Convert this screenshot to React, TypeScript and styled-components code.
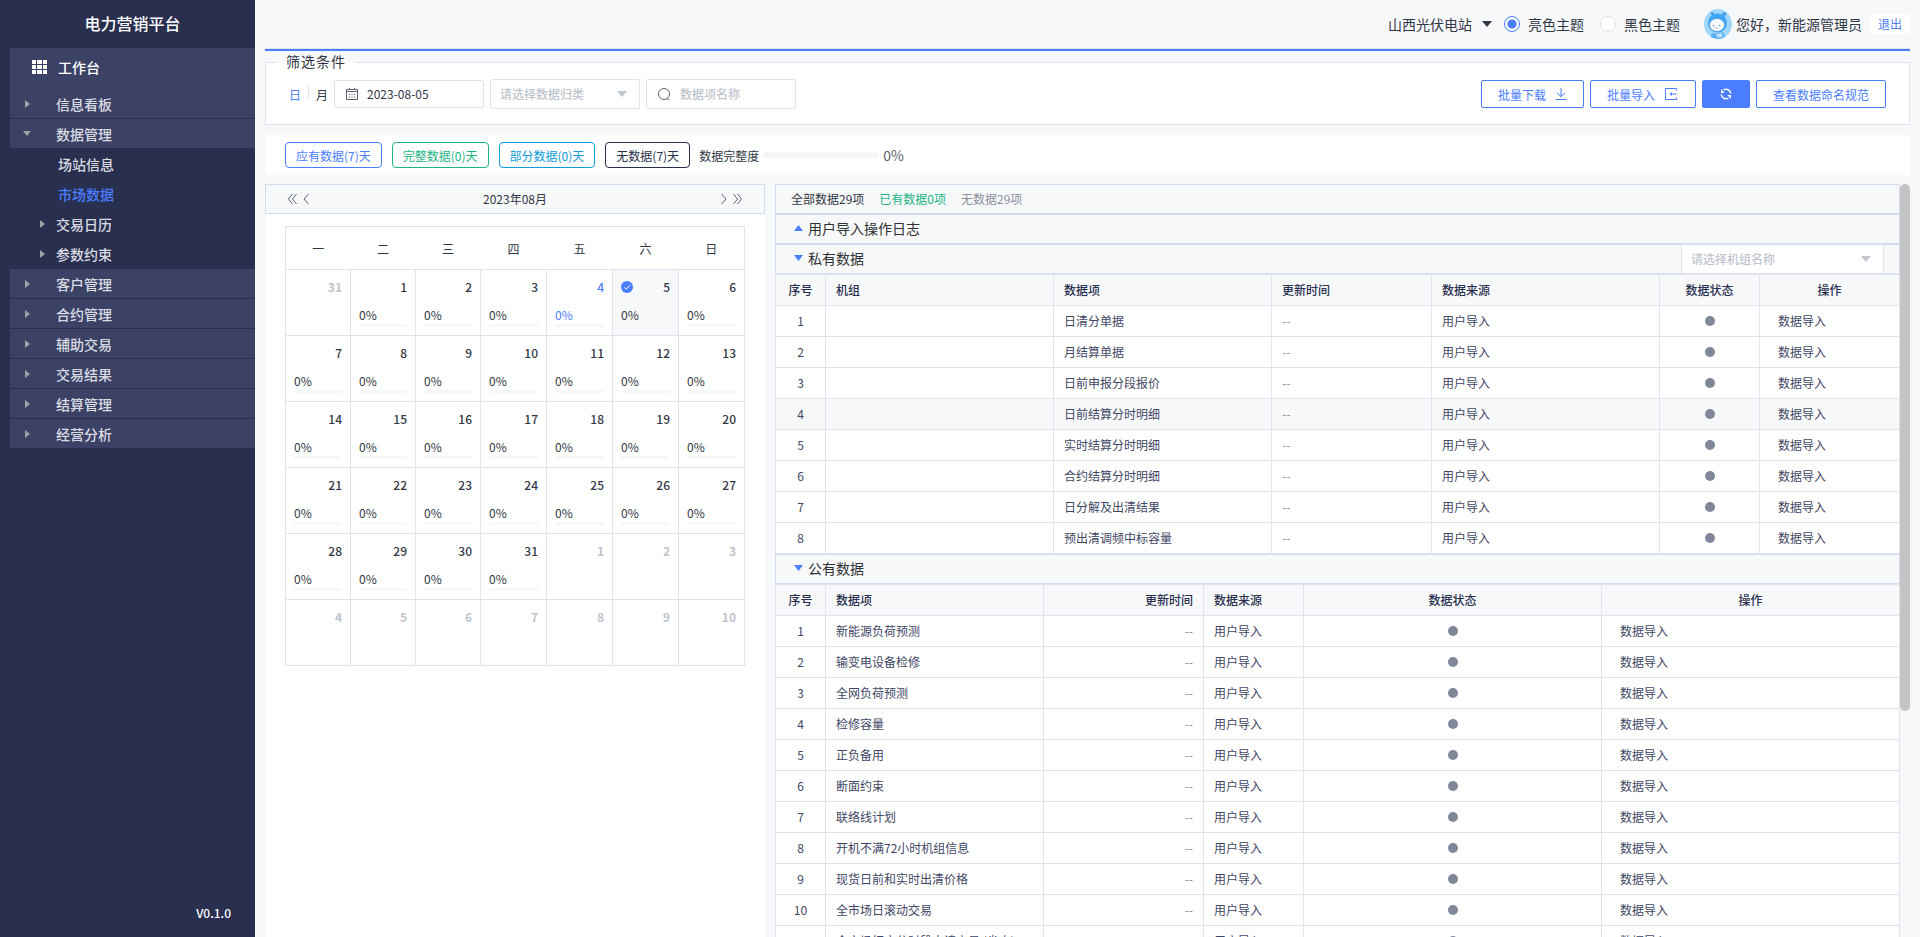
import React from "react";
import styled, { createGlobalStyle } from "styled-components";

const c = {
  primary: "#4a7dff",
  green: "#1bb584",
  sky: "#109bdc",
  navy: "#292f4e",
  menu: "#3b4265",
  page: "#f7f8fa",
  line: "#dfe3f0",
  panelLine: "#d3dcef",
  text: "#303744",
  cell: "#3f4764",
  muted: "#8b909b",
  placeholder: "#c0c4cc",
  dot: "#7f8799",
};

const GlobalStyle = createGlobalStyle`
  *, *::before, *::after { box-sizing: border-box; }
  body { margin: 0; }
  body, button, input, select {
    font-family: "Noto Sans CJK SC", "Noto Sans", sans-serif;
    font-size: 12px;
    color: ${c.text};
  }
  button { cursor: pointer; }
  svg { display: block; flex: none; }
`;

const Shell = styled.div`
  display: grid;
  grid-template-columns: 255px minmax(0, 1fr);
  height: 100vh;
  overflow: hidden;
  background: ${c.page};
`;

/* Sidebar */
const Sidebar = styled.aside`
  display: flex;
  flex-direction: column;
  padding-left: 10px;
  background: ${c.navy};
  color: #fff;
`;
const Brand = styled.h1`
  margin: 0;
  padding-bottom: 2px;
  font-size: 16px;
  font-weight: 500;
  line-height: 46px;
  text-align: center;
`;
const Nav = styled.nav`
  display: flex;
  flex-direction: column;
  flex: 1;
`;
const Workbench = styled.a`
  display: flex;
  align-items: center;
  gap: 11px;
  height: 41px;
  padding: 0 0 4px 22px;
  background: ${c.menu};
  color: #fff;
  font-size: 14px;
  font-weight: 500;
  text-decoration: none;
`;
const MenuItem = styled.a<{ $level: "top" | "sub"; $active?: boolean }>`
  display: flex;
  align-items: center;
  height: 30px;
  padding-left: ${(p) => (p.$level === "top" ? 13 : 28)}px;
  border-bottom: 1px solid ${c.navy};
  background: ${(p) => (p.$level === "top" ? c.menu : "transparent")};
  color: ${(p) => (p.$active ? c.primary : "#d9dbe3")};
  font-size: 14px;
  font-weight: 500;
  text-decoration: none;
`;
const MenuArrow = styled.span<{ $level: "top" | "sub"; $leaf: boolean; $open: boolean }>`
  width: ${(p) => (p.$level === "top" ? 33 : p.$leaf ? 20 : 18)}px;
  padding-left: ${(p) => (p.$open ? 0 : 2)}px;
  color: #a0a1a6;
`;
const Version = styled.footer`
  padding: 0 24px 15px;
  font-weight: 500;
  line-height: 18px;
  text-align: right;
`;

/* Main column */
const Main = styled.main`
  display: flex;
  flex-direction: column;
  min-width: 0;
  min-height: 0;
  padding: 0 10px;
`;
const Header = styled.header`
  display: flex;
  align-items: center;
  justify-content: flex-end;
  height: 51px;
  padding-bottom: 2px;
  border-bottom: 2px solid ${c.primary};
  box-shadow: inset 0 -1px 0 ${c.line};
  font-size: 14px;
`;
const Station = styled.button`
  display: flex;
  align-items: center;
  gap: 10px;
  margin-right: 12px;
  padding: 0;
  border: 0;
  background: none;
  font-size: 14px;
`;
const RadioLabel = styled.label`
  display: flex;
  align-items: center;
  gap: 8px;
  margin-right: 16px;
`;
const Radio = styled.input`
  appearance: none;
  width: 16px;
  height: 16px;
  margin: 0;
  border: 1px solid #dcdfe6;
  border-radius: 50%;
  background: #fff;
  &:checked {
    border-color: ${c.primary};
    background: radial-gradient(circle, ${c.primary} 4px, #fff 5px);
  }
`;
const User = styled.div`
  display: flex;
  align-items: center;
  gap: 4px;
  margin: 0 8px;
`;
const Logout = styled.button`
  height: 20px;
  padding: 0 8px;
  border: 0;
  border-radius: 3px;
  background: #fff;
  color: ${c.primary};
  line-height: 20px;
`;

/* Filters */
const Filters = styled.fieldset`
  min-width: 0;
  margin: 0;
  padding: 0 23px 15px 11px;
  border: 1px solid ${c.line};
  background: #fff;
`;
const Legend = styled.legend`
  padding: 0 9px 2px;
  font-size: 14px;
  letter-spacing: 1px;
  line-height: 20px;
`;
const FilterRow = styled.div`
  display: flex;
  align-items: center;
  justify-content: space-between;
  padding: 6px 0 0 12px;
`;
const Group = styled.div`
  display: flex;
  align-items: center;
  gap: 6px;
`;
const Period = styled.div`
  display: flex;
  align-items: center;
  gap: 7px;
`;
const PeriodButton = styled.button<{ $on?: boolean }>`
  padding: 0;
  border: 0;
  background: none;
  color: ${(p) => (p.$on ? c.primary : c.text)};
`;
const Divider = styled.span`
  width: 1px;
  height: 14px;
  margin-bottom: 4px;
  background: ${c.line};
`;
const Field = styled.label<{ $short?: boolean }>`
  display: flex;
  align-items: center;
  gap: 9px;
  width: 150px;
  height: ${(p) => (p.$short ? 28 : 30)}px;
  padding: 0 11px;
  border: 1px solid ${c.line};
  border-radius: 2px;
  background: #fff;
  color: #5b6270;
`;
const TextInput = styled.input`
  flex: 1;
  min-width: 0;
  padding: 0 0 1px;
  border: 0;
  outline: 0;
  background: none;
  &::placeholder { color: ${c.placeholder}; font-weight: 500; }
`;
const SelectField = styled.label<{ $wide?: boolean }>`
  display: flex;
  align-items: center;
  width: ${(p) => (p.$wide ? 203 : 150)}px;
  height: 30px;
  padding: 0 12px 0 9px;
  border: 1px solid ${c.line};
  border-radius: ${(p) => (p.$wide ? 0 : 2)}px;
  background: #fff;
  color: ${c.placeholder};
`;
const Select = styled.select`
  flex: 1;
  min-width: 0;
  appearance: none;
  padding: 0 0 1px;
  border: 0;
  outline: 0;
  background: none;
  color: ${c.placeholder};
  font-weight: 500;
`;
const Button = styled.button<{ $solid?: boolean }>`
  display: flex;
  align-items: center;
  justify-content: center;
  gap: 9px;
  height: 28px;
  padding: 0 16px;
  border: 1px solid ${c.primary};
  border-radius: 2px;
  background: ${(p) => (p.$solid ? c.primary : "#fff")};
  color: ${(p) => (p.$solid ? "#fff" : c.primary)};
`;

/* Completeness strip */
const Strip = styled.section`
  display: flex;
  align-items: center;
  gap: 10px;
  height: 40px;
  margin-top: 10px;
  padding-left: 20px;
  background: #fff;
`;
const Tag = styled.button<{ $tone: string }>`
  height: 26px;
  padding: 0 10px;
  border: 1px solid ${(p) => p.$tone};
  border-radius: 4px;
  background: #fff;
  color: ${(p) => p.$tone};
`;
const Completeness = styled.div`
  display: flex;
  align-items: center;
  gap: 4px;
  margin-left: -1px;
`;
const Track = styled.span`
  width: 115px;
  height: 6px;
  border-radius: 3px;
  background: #f6f7f9;
`;
const Percent = styled.span`
  padding: 0 0 1px 1px;
  color: #606266;
  font-size: 14px;
`;

/* Panels */
const Panels = styled.div`
  display: grid;
  grid-template-columns: 500px minmax(0, 1fr);
  gap: 10px;
  flex: 1;
  min-height: 0;
  margin-top: 9px;
`;
const CalendarPanel = styled.section`
  background: #fff;
`;
const Bar = styled.div`
  display: flex;
  align-items: center;
  height: 30px;
  border: 1px solid ${c.panelLine};
  background: ${c.page};
`;
const CalendarBar = styled(Bar)`
  justify-content: space-between;
  padding: 0 21px 1px;
`;
const Arrows = styled.div`
  display: flex;
  gap: 6px;
`;
const ArrowButton = styled.button`
  padding: 0;
  border: 0;
  background: none;
  color: #5b6270;
`;
const CalendarTable = styled.table`
  width: calc(100% - 40px);
  margin: 12px 20px 0;
  border-collapse: collapse;
  table-layout: fixed;
`;
const WeekDay = styled.th`
  height: 43px;
  padding: 0;
  border: 1px solid ${c.line};
  border-width: 1px 0;
  font-weight: 400;
  &:first-child { border-left-width: 1px; }
  &:last-child { border-right-width: 1px; }
`;
const Day = styled.td<{ $selected?: boolean }>`
  height: 66px;
  padding: 8px 8px 0;
  border: 1px solid ${c.line};
  background: ${(p) => (p.$selected ? c.page : "#fff")};
  vertical-align: top;
`;
const DayHead = styled.div<{ $outside?: boolean; $today?: boolean }>`
  display: flex;
  align-items: center;
  justify-content: space-between;
  color: ${(p) => (p.$outside ? c.placeholder : p.$today ? c.primary : c.text)};
  font-weight: ${(p) => (p.$outside ? 700 : 500)};
  line-height: 18px;
`;
const DayRate = styled.div<{ $today?: boolean }>`
  padding-top: 10px;
  border-bottom: 3px solid #f6f7f9;
  color: ${(p) => (p.$today ? c.primary : c.text)};
  line-height: 18px;
`;

const DataPanel = styled.section`
  display: grid;
  grid-template-columns: minmax(0, 1fr) 10px;
  min-height: 0;
  overflow: hidden;
`;
const DataScroll = styled.div`
  min-height: 0;
  overflow: hidden;
`;
const ScrollThumb = styled.div`
  height: 70%;
  border-radius: 5px;
  background: #c4c4c4;
`;
const Summary = styled(Bar)`
  gap: 15px;
  padding: 0 0 1px 15px;
`;
const Count = styled.span<{ $tone: string }>`
  color: ${(p) => p.$tone};
`;
const SectionBar = styled(Bar)`
  justify-content: space-between;
  padding: 0 15px 0 18px;
`;
const Toggle = styled.button`
  display: flex;
  align-items: center;
  gap: 5px;
  padding: 0 0 2px;
  border: 0;
  background: none;
  color: #303133;
  font-size: 14px;
  svg { color: ${c.primary}; }
`;
const DataTable = styled.table`
  width: 100%;
  border-collapse: collapse;
  table-layout: fixed;
`;
const Th = styled.th<{ $align?: string }>`
  height: 31px;
  padding: 0 10px;
  border: 1px solid ${c.line};
  background: ${c.page};
  color: ${c.navy};
  font-weight: 500;
  line-height: 18px;
  text-align: ${(p) => p.$align || "left"};
`;
const Row = styled.tr<{ $hover?: boolean }>`
  background: ${(p) => (p.$hover ? c.page : "#fff")};
`;
const Td = styled.td<{ $align?: string; $muted?: boolean }>`
  height: 31px;
  padding: 0 10px;
  border: 1px solid ${c.line};
  color: ${(p) => (p.$muted ? c.muted : c.cell)};
  line-height: 18px;
  text-align: ${(p) => p.$align || "left"};
  white-space: nowrap;
`;
const Dot = styled.i`
  display: block;
  width: 10px;
  height: 10px;
  margin: 0 auto;
  border-radius: 50%;
  background: ${c.dot};
`;
const ImportLink = styled.a`
  padding-left: 8px;
  color: ${c.cell};
  text-decoration: none;
`;

/* Icons */
const Triangle = ({ dir, size = 10 }: { dir: "up" | "down" | "right"; size?: number }) => {
  const depth = Math.ceil(size * 0.6);
  if (dir === "right")
    return (
      <svg width="5" height={size} viewBox={`0 0 5 ${size}`}>
        <path d={`M0 0l5 ${size / 2}-5 ${size / 2}z`} fill="currentColor" />
      </svg>
    );
  return (
    <svg width={size} height={depth} viewBox={`0 0 ${size} ${depth}`}>
      <path
        d={dir === "up" ? `M0 ${depth}L${size / 2} 0L${size} ${depth}z` : `M0 0H${size}L${size / 2} ${depth}z`}
        fill="currentColor"
      />
    </svg>
  );
};
const GridIcon = () => (
  <svg width="15" height="14" viewBox="0 0 15 14" fill="#fff">
    {[0, 5, 10].map((y) => [0, 5, 11].map((x) => <rect key={`${x}-${y}`} x={x} y={y} width={x === 5 ? 5 : 4} height="4" />))}
  </svg>
);
const CalendarIcon = () => (
  <svg width="12" height="12" viewBox="0 0 12 12" fill="none" stroke="currentColor">
    <path d="M.5 1.500h11v10H.5zM.5 3.500h11M3.500 0v2M8.500 0v2" />
    <path
      d="M2.500 6.500h1.500M5.250 6.500h1.500M8 6.500h1.500M2.500 9h1.500M5.250 9h1.500M8 9h1.500"
      opacity=".7"
    />
  </svg>
);
const SearchIcon = () => (
  <svg width="13" height="13" viewBox="0 0 13 13" fill="none" stroke="currentColor">
    <circle cx="6" cy="6" r="5.500" />
    <path d="M9 10.500l2.500 1.500" />
  </svg>
);
const DownloadIcon = () => (
  <svg width="12" height="12" viewBox="0 0 12 12" fill="none" stroke="currentColor">
    <path d="M6 0v8.500M2 4.800L6 8.600l4-3.800M.5 11.500h11" />
  </svg>
);
const ImportIcon = () => (
  <svg width="15" height="14" viewBox="0 0 15 14" fill="none" stroke="currentColor">
    <path d="M12.500 3.500v-2h-11v11h11v-2M12.500 7h-5" />
    <path d="M5.500 7l2.500-2v4z" fill="currentColor" stroke="none" />
  </svg>
);
const RefreshIcon = () => (
  <svg width="14" height="14" viewBox="0 0 14 14" fill="none" stroke="#fff" strokeWidth="1.500">
    <path d="M4.500 2.800a5 5 0 0 1 7.300 3.700M9.500 11.200a5 5 0 0 1-7.300-3.700" />
    <path d="M2 2v4h3.800zM12 12V8H8.200z" fill="#fff" stroke="none" />
  </svg>
);
const Chevron = ({ double, right }: { double?: boolean; right?: boolean }) => {
  const w = double ? 10 : 6;
  return (
    <svg width={w} height="12" viewBox={`0 0 ${w} 12`} fill="none" stroke="currentColor">
      {right ? (
        <path d={double ? "M.5 1l4 5-4 5M4.500 1l4 5-4 5" : "M.5 1L5 6 .5 11"} />
      ) : (
        <path d={double ? "M5.500 1l-4 5 4 5M9.500 1l-4 5 4 5" : "M5.500 1L1 6l4.500 5"} />
      )}
    </svg>
  );
};
const CheckIcon = () => (
  <svg width="12" height="12" viewBox="0 0 12 12">
    <circle cx="6" cy="6" r="6" fill={c.primary} />
    <path d="M3.300 6.200l2 1.900 3.500-3.800" fill="none" stroke="#fff" />
  </svg>
);
const Avatar = () => (
  <svg width="28" height="30" viewBox="0 0 28 30">
    <clipPath id="face">
      <ellipse cx="14" cy="15" rx="14" ry="15" />
    </clipPath>
    <g clipPath="url(#face)">
      <rect width="28" height="30" fill="#9fd6fb" />
      <path d="M9 7L7 4q2-1 4 2M18 6q1-3 4-2l-2 4" fill="#5aaef0" stroke="#3b8ede" />
      <circle cx="13.500" cy="14" r="9.500" fill="#3fa7f5" />
      <ellipse cx="13" cy="16" rx="7.500" ry="6.500" fill="#f5faff" stroke="#3580d0" strokeWidth=".5" />
      <circle cx="9.500" cy="16.500" r=".8" fill="#5b8fc8" />
      <circle cx="15.500" cy="16.500" r=".8" fill="#5b8fc8" />
      <path d="M11.500 18.500q1 1 2 0" stroke="#5b8fc8" strokeWidth=".8" fill="none" />
      <path d="M6 30l2-6q6 2 11-1l3 7z" fill="#58b2f4" />
      <path d="M12 25l6-1 1 4-6 1z" fill="#bfe3fc" stroke="#6aa8e4" strokeWidth=".5" />
    </g>
  </svg>
);

/* Data */
type MenuEntry = { name: string; level: "top" | "sub"; arrow?: "down" | "right"; active?: boolean };
const menu: MenuEntry[] = [
  { name: "信息看板", level: "top", arrow: "right" },
  { name: "数据管理", level: "top", arrow: "down" },
  { name: "场站信息", level: "sub" },
  { name: "市场数据", level: "sub", active: true },
  { name: "交易日历", level: "sub", arrow: "right" },
  { name: "参数约束", level: "sub", arrow: "right" },
  ...["客户管理", "合约管理", "辅助交易", "交易结果", "结算管理", "经营分析"].map(
    (name): MenuEntry => ({ name, level: "top", arrow: "right" })
  ),
];
const tags = [
  { text: "应有数据(7)天", tone: c.primary },
  { text: "完整数据(0)天", tone: c.green },
  { text: "部分数据(0)天", tone: c.sky },
  { text: "无数据(7)天", tone: c.navy },
];
const weekDays = ["一", "二", "三", "四", "五", "六", "日"];
const weeks = Array.from({ length: 6 }, (_, w) =>
  Array.from({ length: 7 }, (_, d) => {
    const n = w * 7 + d;
    if (n === 0) return { date: 31, outside: true };
    return n > 31 ? { date: n - 31, outside: true } : { date: n, outside: false };
  })
);
const privateItems = [
  "日清分单据",
  "月结算单据",
  "日前申报分段报价",
  "日前结算分时明细",
  "实时结算分时明细",
  "合约结算分时明细",
  "日分解及出清结果",
  "预出清调频中标容量",
];
const publicItems = [
  "新能源负荷预测",
  "输变电设备检修",
  "全网负荷预测",
  "检修容量",
  "正负备用",
  "断面约束",
  "联络线计划",
  "开机不满72小时机组信息",
  "现货日前和实时出清价格",
  "全市场日滚动交易",
  "全市场红方分时段申请交易 (省内)",
];
const Columns = ({ widths }: { widths: number[] }) => (
  <colgroup>
    {widths.map((width, i) => (
      <col key={i} width={width} />
    ))}
  </colgroup>
);

export default function App() {
  return (
    <>
      <GlobalStyle />
      <Shell>
        <Sidebar>
          <Brand>电力营销平台</Brand>
          <Nav>
            <Workbench href="#">
              <GridIcon />
              工作台
            </Workbench>
            {menu.map((m) => (
              <MenuItem key={m.name} href="#" $level={m.level} $active={m.active}>
                <MenuArrow $level={m.level} $leaf={!m.arrow} $open={m.arrow === "down"}>
                  {m.arrow && <Triangle dir={m.arrow} size={8} />}
                </MenuArrow>
                {m.name}
              </MenuItem>
            ))}
          </Nav>
          <Version>V0.1.0</Version>
        </Sidebar>

        <Main>
          <Header>
            <Station>
              山西光伏电站
              <Triangle dir="down" />
            </Station>
            <RadioLabel>
              <Radio type="radio" name="theme" defaultChecked />
              亮色主题
            </RadioLabel>
            <RadioLabel>
              <Radio type="radio" name="theme" />
              黑色主题
            </RadioLabel>
            <User>
              <Avatar />
              您好，新能源管理员
            </User>
            <Logout>退出</Logout>
          </Header>

          <Filters>
            <Legend>筛选条件</Legend>
            <FilterRow>
              <Group>
                <Period>
                  <PeriodButton $on>日</PeriodButton>
                  <Divider />
                  <PeriodButton>月</PeriodButton>
                </Period>
                <Field $short>
                  <CalendarIcon />
                  <TextInput aria-label="日期" defaultValue="2023-08-05" />
                </Field>
                <SelectField>
                  <Select aria-label="数据归类">
                    <option>请选择数据归类</option>
                  </Select>
                  <Triangle dir="down" />
                </SelectField>
                <Field>
                  <SearchIcon />
                  <TextInput aria-label="数据项名称" placeholder="数据项名称" />
                </Field>
              </Group>
              <Group>
                <Button>
                  批量下载
                  <DownloadIcon />
                </Button>
                <Button>
                  批量导入
                  <ImportIcon />
                </Button>
                <Button $solid aria-label="刷新">
                  <RefreshIcon />
                </Button>
                <Button>查看数据命名规范</Button>
              </Group>
            </FilterRow>
          </Filters>

          <Strip>
            {tags.map((t) => (
              <Tag key={t.text} $tone={t.tone}>
                {t.text}
              </Tag>
            ))}
            <Completeness>
              数据完整度
              <Track />
              <Percent>0%</Percent>
            </Completeness>
          </Strip>

          <Panels>
            <CalendarPanel>
              <CalendarBar>
                <Arrows>
                  <ArrowButton aria-label="上一年">
                    <Chevron double />
                  </ArrowButton>
                  <ArrowButton aria-label="上一月">
                    <Chevron />
                  </ArrowButton>
                </Arrows>
                2023年08月
                <Arrows>
                  <ArrowButton aria-label="下一月">
                    <Chevron right />
                  </ArrowButton>
                  <ArrowButton aria-label="下一年">
                    <Chevron double right />
                  </ArrowButton>
                </Arrows>
              </CalendarBar>
              <CalendarTable>
                <Columns widths={[65, 65, 65, 66, 66, 66, 66]} />
                <thead>
                  <tr>
                    {weekDays.map((d) => (
                      <WeekDay key={d}>{d}</WeekDay>
                    ))}
                  </tr>
                </thead>
                <tbody>
                  {weeks.map((week, w) => (
                    <tr key={w}>
                      {week.map(({ date, outside }, d) => {
                        const selected = !outside && date === 5;
                        const today = !outside && date === 4;
                        return (
                          <Day key={d} $selected={selected}>
                            <DayHead $outside={outside} $today={today}>
                              <span>{selected && <CheckIcon />}</span>
                              {date}
                            </DayHead>
                            {!outside && <DayRate $today={today}>0%</DayRate>}
                          </Day>
                        );
                      })}
                    </tr>
                  ))}
                </tbody>
              </CalendarTable>
            </CalendarPanel>

            <DataPanel>
              <DataScroll>
                <Summary>
                  <Count $tone={c.text}>全部数据29项</Count>
                  <Count $tone={c.green}>已有数据0项</Count>
                  <Count $tone={c.muted}>无数据29项</Count>
                </Summary>
                <SectionBar>
                  <Toggle>
                    <Triangle dir="up" size={9} />
                    用户导入操作日志
                  </Toggle>
                </SectionBar>
                <SectionBar>
                  <Toggle>
                    <Triangle dir="down" size={9} />
                    私有数据
                  </Toggle>
                  <SelectField $wide>
                    <Select aria-label="机组名称">
                      <option>请选择机组名称</option>
                    </Select>
                    <Triangle dir="down" />
                  </SelectField>
                </SectionBar>
                <DataTable>
                  <Columns widths={[50, 228, 218, 160, 228, 100, 140]} />
                  <thead>
                    <tr>
                      <Th $align="center">序号</Th>
                      <Th>机组</Th>
                      <Th>数据项</Th>
                      <Th>更新时间</Th>
                      <Th>数据来源</Th>
                      <Th $align="center">数据状态</Th>
                      <Th $align="center">操作</Th>
                    </tr>
                  </thead>
                  <tbody>
                    {privateItems.map((name, i) => (
                      <Row key={name} $hover={i === 3}>
                        <Td $align="center">{i + 1}</Td>
                        <Td />
                        <Td>{name}</Td>
                        <Td $muted>--</Td>
                        <Td>用户导入</Td>
                        <Td>
                          <Dot />
                        </Td>
                        <Td>
                          <ImportLink href="#">数据导入</ImportLink>
                        </Td>
                      </Row>
                    ))}
                  </tbody>
                </DataTable>
                <SectionBar>
                  <Toggle>
                    <Triangle dir="down" size={9} />
                    公有数据
                  </Toggle>
                </SectionBar>
                <DataTable>
                  <Columns widths={[50, 218, 160, 100, 298, 298]} />
                  <thead>
                    <tr>
                      <Th $align="center">序号</Th>
                      <Th>数据项</Th>
                      <Th $align="right">更新时间</Th>
                      <Th>数据来源</Th>
                      <Th $align="center">数据状态</Th>
                      <Th $align="center">操作</Th>
                    </tr>
                  </thead>
                  <tbody>
                    {publicItems.map((name, i) => (
                      <Row key={name}>
                        <Td $align="center">{i + 1}</Td>
                        <Td>{name}</Td>
                        <Td $align="right" $muted>
                          --
                        </Td>
                        <Td>用户导入</Td>
                        <Td>
                          <Dot />
                        </Td>
                        <Td>
                          <ImportLink href="#">数据导入</ImportLink>
                        </Td>
                      </Row>
                    ))}
                  </tbody>
                </DataTable>
              </DataScroll>
              <ScrollThumb />
            </DataPanel>
          </Panels>
        </Main>
      </Shell>
    </>
  );
}
